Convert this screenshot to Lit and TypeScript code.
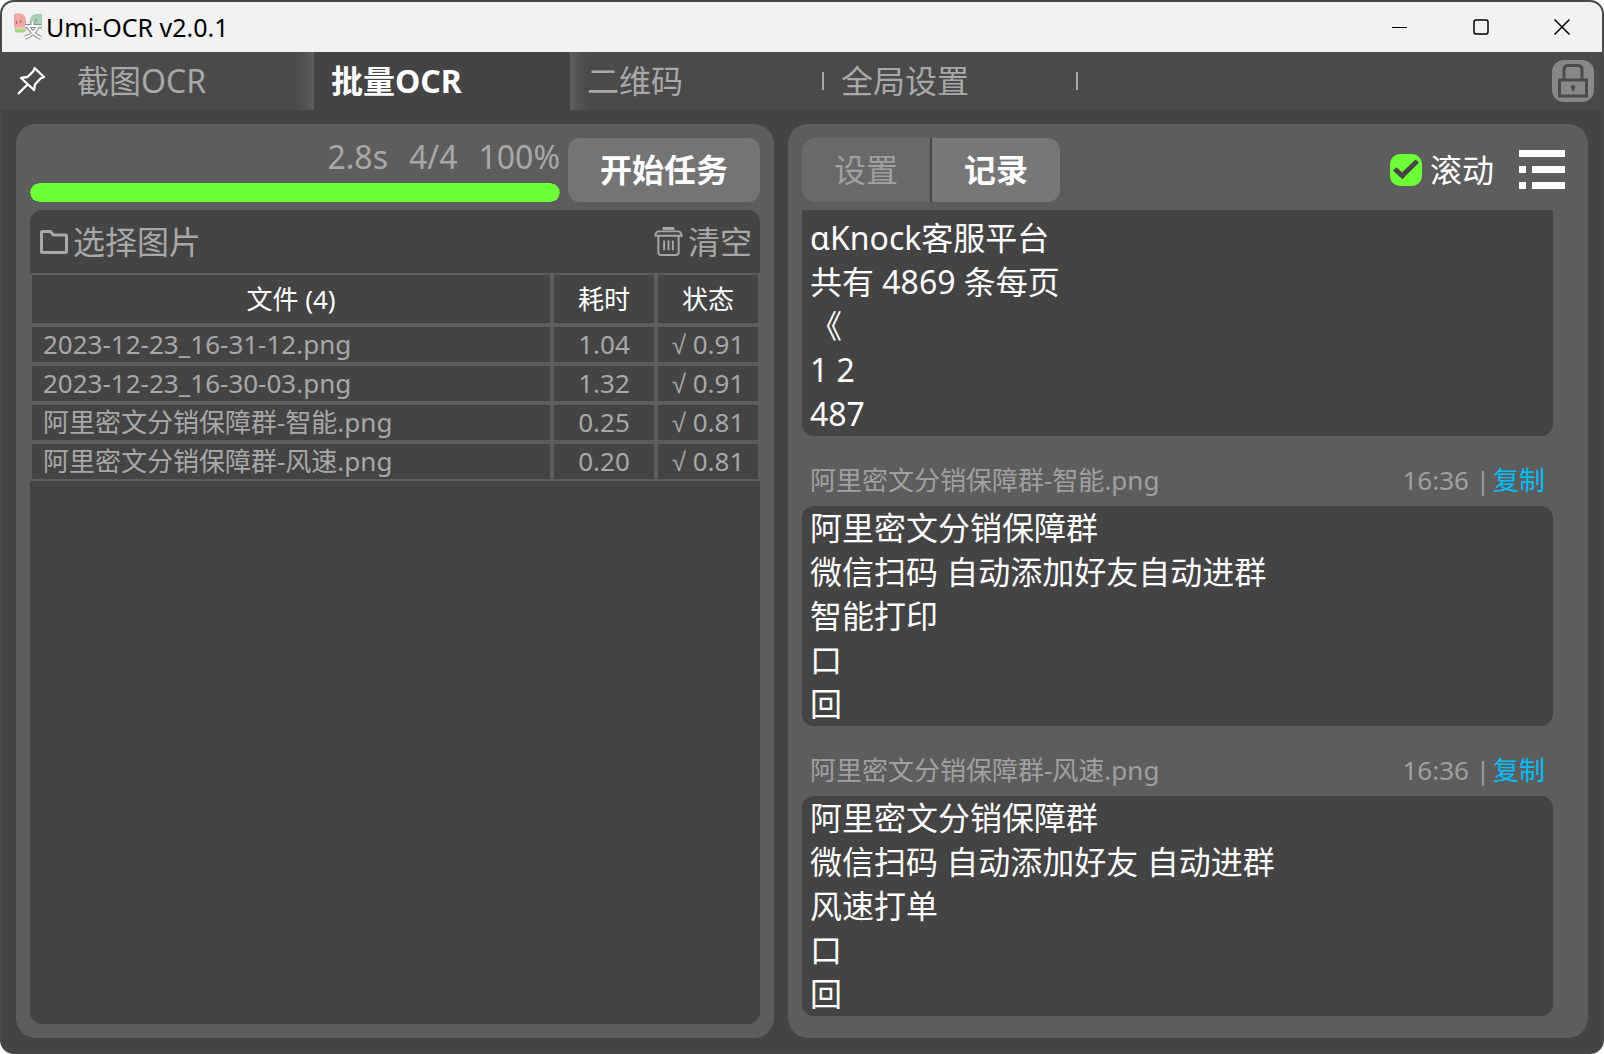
import { LitElement, html, css, svg } from "lit";
import { customElement, state } from "lit/decorators.js";
import { classMap } from "lit/directives/class-map.js";

interface FileRow {
  name: string;
  time: string;
  score: string;
}

interface OcrRecord {
  file: string;
  at: string;
  lines: string[];
}

const TABS = ["截图OCR", "批量OCR", "二维码", "全局设置"];

const STATS = ["2.8s", "4/4", "100%"];

const FILES: FileRow[] = [
  { name: "2023-12-23_16-31-12.png", time: "1.04", score: "0.91" },
  { name: "2023-12-23_16-30-03.png", time: "1.32", score: "0.91" },
  { name: "阿里密文分销保障群-智能.png", time: "0.25", score: "0.81" },
  { name: "阿里密文分销保障群-风速.png", time: "0.20", score: "0.81" },
];

const TAIL = ["αKnock客服平台", "共有 4869 条每页", "《", "1 2", "487"];

const RECORDS: OcrRecord[] = [
  {
    file: "阿里密文分销保障群-智能.png",
    at: "16:36",
    lines: ["阿里密文分销保障群", "微信扫码 自动添加好友自动进群", "智能打印", "口", "回"],
  },
  {
    file: "阿里密文分销保障群-风速.png",
    at: "16:36",
    lines: ["阿里密文分销保障群", "微信扫码 自动添加好友 自动进群", "风速打单", "口", "回"],
  },
];

const logo = svg`<svg class="logo" viewBox="0 0 28 28" aria-hidden="true">
  <path d="M0 1Q6-1 10 2Q13 6 12 12L8 15L0 14Z" fill="#f0a8a4"/>
  <path d="M28 1Q20 0 17 4Q15 8 16 14L28 16Z" fill="#a5cfae"/>
  <path d="M0 14L8 15L12 12L13 17L8 20L1 18Z" fill="#d9c9bd"/>
  <path d="M2.500 8v3M6.500 7v3M22 6v2" stroke="#a3686a" stroke-width="1.200"/>
  <path d="M1 18.500L11 18" stroke="#8be35c" stroke-width="1.800"/>
  <path d="M18.500 8V12M11 13H27M14 13Q18 21 27 25M24 13Q20 22 11 24.500" fill="none" stroke="#8c8c8c" stroke-width="4"/>
  <path d="M18.500 8V12M11 13H27M14 13Q18 21 27 25M24 13Q20 22 11 24.500" fill="none" stroke="#fff" stroke-width="2"/>
</svg>`;

const pin = svg`<svg class="pin-icon" viewBox="0 0 30 30" aria-hidden="true">
  <path d="M18.500 2L28 11L24.500 12.500L19 18.500L18 24L5 12L11.500 11L17.500 5Z M11.500 18.500L2 28" fill="none" stroke="#fff" stroke-width="2.300" stroke-linejoin="round"/>
</svg>`;

const lock = svg`<svg class="lock-icon" viewBox="0 0 42 42" aria-hidden="true">
  <path d="M12 19V10Q12 5.500 16 5.500H26Q30 5.500 30 10V19" fill="none" stroke="#4a4a4a" stroke-width="3"/>
  <rect x="7.500" y="20" width="27" height="16" fill="none" stroke="#4a4a4a" stroke-width="3"/>
  <path d="M21 25a2.200 2.200 0 0 1 1 4.200V31h-2v-1.800A2.200 2.200 0 0 1 21 25Z" fill="#4a4a4a"/>
</svg>`;

const folder = svg`<svg class="folder-icon" viewBox="0 0 28 28" aria-hidden="true">
  <path d="M1.500 4.500Q1.500 3.500 2.500 3.500H10.500L13.500 7H25.500Q26.500 7 26.500 8V23.500Q26.500 24.500 25.500 24.500H2.500Q1.500 24.500 1.500 23.500Z" fill="none" stroke="#a8a8a8" stroke-width="3"/>
</svg>`;

const trash = svg`<svg class="trash-icon" viewBox="0 0 30 32" aria-hidden="true">
  <g fill="none" stroke="#a8a8a8" stroke-width="2">
    <path d="M9 2.500H21" stroke-width="3"/>
    <path d="M5 5.500H25Q28.500 6 28.500 10H1.500Q1.500 6 5 5.500Z"/>
    <path d="M4.500 10V27Q4.500 30 7.500 30H22.500Q25.500 30 25.500 27V10"/>
    <path d="M10.500 15V25M15 15V25M19.500 15V25"/>
  </g>
</svg>`;

const list = svg`<svg class="list-icon" viewBox="0 0 46 40" aria-hidden="true">
  <path d="M0 0h46v7H0zM0 16h7v7H0zM13 16h33v7H13zM0 32h7v7H0zM13 32h33v7H13z" fill="#fff"/>
</svg>`;

@customElement("app-root")
export class AppRoot extends LitElement {
  @state() private tab = 1;
  @state() private pane = 1;

  static styles = css`
    :host {
      display: block;
      height: 100vh;
      background: #fff;
      color: #fff;
      font-family: "Noto Sans", "Noto Sans CJK SC", sans-serif;
      font-size: 32px;
      line-height: 44px;
    }
    *, *::before, *::after { box-sizing: border-box; }
    button {
      margin: 0;
      padding: 0;
      border: 0;
      background: none;
      color: inherit;
      font: inherit;
      cursor: pointer;
    }
    svg { display: block; flex: none; }
    .window {
      height: 100%;
      display: flex;
      flex-direction: column;
      overflow: hidden;
      border: 2px solid #484848;
      border-radius: 14px;
      background: #444;
    }
    .titlebar {
      flex: none;
      height: 50px;
      display: flex;
      align-items: center;
      padding-left: 12px;
      background: #f2f2f2;
      color: #000;
    }
    .logo { width: 28px; height: 28px; }
    .title {
      flex: 1;
      margin: 0;
      padding-left: 4px;
      font-size: 25px;
      font-weight: 400;
    }
    .win-btn {
      width: 81px;
      height: 50px;
      display: grid;
      place-items: center;
    }
    .win-btn svg { width: 16px; height: 16px; fill: none; stroke: #000; }
    .tabbar {
      flex: none;
      height: 58px;
      display: flex;
      align-items: center;
      background: #4a4a4a;
      padding-right: 8px;
    }
    .pin { width: 58px; height: 58px; display: flex; align-items: center; padding-left: 14px; }
    .pin-icon { width: 30px; height: 30px; }
    .tabs { flex: 1; display: flex; min-width: 0; }
    .tab {
      flex: 0 1 254px;
      min-width: 0;
      height: 58px;
      display: flex;
      align-items: center;
      justify-content: space-between;
      padding-left: 17px;
      color: #a8a8a8;
      white-space: nowrap;
    }
    .tab::after { content: ""; width: 2px; height: 18px; background: #a8a8a8; }
    .tab.active { flex-basis: 256px; background: #444; color: #fff; font-weight: 700; }
    .tab.active::after, .tab.before::after { content: none; }
    .tab.before { background: linear-gradient(to left, #606060, #515151 9px, #4a4a4a 20px); }
    .tab.after { background: linear-gradient(to right, #606060, #515151 9px, #4a4a4a 20px); }
    .lock { border-radius: 12px; background: #888; }
    .lock-icon { width: 42px; height: 42px; }
    .body {
      flex: 1;
      min-height: 0;
      display: grid;
      grid-template-columns: 758fr 800fr;
      gap: 14px;
      padding: 14px;
    }
    .panel {
      min-width: 0;
      min-height: 0;
      display: flex;
      flex-direction: column;
      gap: 8px;
      padding: 14px;
      border-radius: 20px;
      background: #5d5d5d;
    }
    .row { flex: none; display: flex; align-items: center; gap: 8px; height: 64px; }
    .progress { flex: 1; height: 64px; display: flex; flex-direction: column; justify-content: space-between; }
    .stats { display: flex; justify-content: flex-end; gap: 21px; line-height: 38px; color: #a8a8a8; }
    .track { height: 19px; border-radius: 10px; background: #444; overflow: hidden; }
    .fill { height: 100%; border-radius: 10px; background: #6fff39; }
    .start { width: 192px; height: 64px; border-radius: 12px; background: #747474; font-weight: 700; }
    .files {
      flex: 1;
      min-height: 0;
      overflow: hidden;
      border-radius: 12px;
      background: #444;
      color: #a8a8a8;
    }
    .tools { height: 63px; display: flex; align-items: center; justify-content: space-between; padding: 0 8px 0 10px; }
    .tool { display: flex; align-items: center; gap: 5px; }
    .folder-icon { width: 28px; height: 28px; }
    .trash-icon { width: 29px; height: 31px; }
    .table { width: 100%; border-collapse: separate; border-spacing: 0; table-layout: fixed; font-size: 26px; line-height: 34px; }
    .table th, .table td { padding: 0 0 1px; border: 2px solid #5d5d5d; height: 39px; font-weight: 400; text-align: center; white-space: nowrap; overflow: hidden; }
    .table th { height: 52px; padding: 0; color: #fff; }
    .table .name { text-align: left; padding-left: 11px; }
    .table .state { font-family: "Noto Sans", "Liberation Sans", sans-serif; }
    .narrow { width: 104px; }
    .seg { display: flex; gap: 2px; background: #444; border-radius: 12px; overflow: hidden; }
    .seg-btn { width: 128px; height: 64px; background: #696969; color: #a0a0a0; }
    .seg-btn.active { background: #777; color: #fff; font-weight: 700; }
    .spacer { flex: 1; }
    .scroll { display: flex; align-items: center; gap: 8px; }
    .check {
      appearance: none;
      width: 32px;
      height: 32px;
      margin: 0;
      display: grid;
      place-items: center;
      border-radius: 10px;
      background: #444;
    }
    .check:checked { background: #6fff39; }
    .check:checked::before {
      content: "";
      width: 26px;
      height: 22px;
      background: #444;
      clip-path: polygon(0 52%, 13% 38%, 35% 60%, 87% 2%, 100% 16%, 36% 92%);
    }
    .menu { padding: 0 9px 0 17px; }
    .list-icon { width: 46px; height: 40px; }
    .records {
      flex: 1;
      min-height: 0;
      display: flex;
      flex-direction: column;
      overflow: hidden;
      padding-right: 21px;
    }
    .text { margin: 0; padding: 0 8px; border-radius: 12px; background: #444; }
    .text.tail { padding-top: 6px; border-top-left-radius: 0; border-top-right-radius: 0; }
    .line { margin: 0; }
    .meta { display: flex; align-items: center; height: 70px; padding: 18px 8px 0; font-size: 26px; color: #a0a0a0; }
    .file { flex: 1; min-width: 0; }
    .copy { padding-left: 3px; color: #00bfff; }
  `;

  private tabClass(i: number) {
    return classMap({
      tab: true,
      active: i === this.tab,
      before: i === this.tab - 1,
      after: i === this.tab + 1,
    });
  }

  render() {
    return html`
      <div class="window">
        <header class="titlebar">
          ${logo}
          <h1 class="title">Umi-OCR v2.0.1</h1>
          <button class="win-btn" aria-label="最小化"><svg viewBox="0 0 16 16"><path d="M0 8.500H15"/></svg></button>
          <button class="win-btn" aria-label="最大化"><svg viewBox="0 0 16 16"><rect x="1" y="1" width="14" height="14" rx="2" stroke-width="1.500"/></svg></button>
          <button class="win-btn" aria-label="关闭"><svg viewBox="0 0 16 16"><path d="M.5.5L15.500 15.500M15.500.5L.5 15.500" stroke-width="1.500"/></svg></button>
        </header>
        <nav class="tabbar">
          <button class="pin" aria-label="窗口置顶">${pin}</button>
          <div class="tabs" role="tablist">
            ${TABS.map(
              (t, i) => html`<button role="tab" aria-selected=${i === this.tab} class=${this.tabClass(i)}
                @click=${() => (this.tab = i)}>${t}</button>`
            )}
          </div>
          <button class="lock" aria-label="锁定标签页">${lock}</button>
        </nav>
        <main class="body">
          <section class="panel">
            <div class="row">
              <div class="progress">
                <div class="stats">${STATS.map((s) => html`<span>${s}</span>`)}</div>
                <div class="track"><div class="fill"></div></div>
              </div>
              <button class="start">开始任务</button>
            </div>
            <div class="files">
              <div class="tools">
                <button class="tool">${folder}选择图片</button>
                <button class="tool">${trash}清空</button>
              </div>
              <table class="table">
                <thead>
                  <tr><th>文件 (${FILES.length})</th><th class="narrow">耗时</th><th class="narrow">状态</th></tr>
                </thead>
                <tbody>
                  ${FILES.map(
                    (f) => html`<tr><td class="name">${f.name}</td><td>${f.time}</td><td class="state">√ ${f.score}</td></tr>`
                  )}
                </tbody>
              </table>
            </div>
          </section>
          <section class="panel">
            <div class="row">
              <div class="seg" role="tablist">
                ${["设置", "记录"].map(
                  (t, i) => html`<button role="tab" aria-selected=${i === this.pane}
                    class=${classMap({ "seg-btn": true, active: i === this.pane })}
                    @click=${() => (this.pane = i)}>${t}</button>`
                )}
              </div>
              <div class="spacer"></div>
              <label class="scroll"><input class="check" type="checkbox" checked />滚动</label>
              <button class="menu" aria-label="菜单">${list}</button>
            </div>
            <div class="records">
              <div class="text tail">${TAIL.map((l) => html`<p class="line">${l}</p>`)}</div>
              ${RECORDS.map(
                (r) => html`
                  <div class="meta"><span class="file">${r.file}</span><span>${r.at} |</span><button class="copy">复制</button></div>
                  <div class="text">${r.lines.map((l) => html`<p class="line">${l}</p>`)}</div>
                `
              )}
            </div>
          </section>
        </main>
      </div>
    `;
  }
}
